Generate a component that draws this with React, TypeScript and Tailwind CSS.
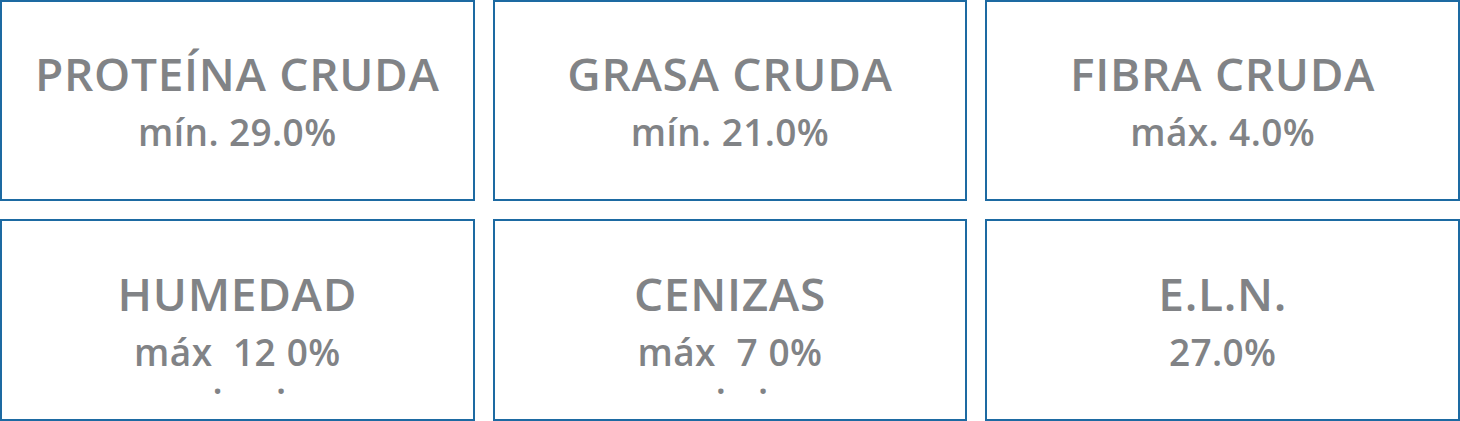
const cards: { title: string; value: React.ReactNode }[] = [
  { title: "PROTEÍNA CRUDA", value: "mín. 29.0%" },
  { title: "GRASA CRUDA", value: "mín. 21.0%" },
  { title: "FIBRA CRUDA", value: "máx. 4.0%" },
  {
    title: "HUMEDAD",
    value: (
      <>
        máx<Dot /> 12<Dot />0%
      </>
    ),
  },
  {
    title: "CENIZAS",
    value: (
      <>
        máx<Dot /> 7<Dot />0%
      </>
    ),
  },
  { title: "E.L.N.", value: "27.0%" },
];

function Dot() {
  return <span className="relative top-[28px]">.</span>;
}

export default function App() {
  return (
    <div
      className="grid h-[421px] w-[1460px] grid-cols-3 grid-rows-[201px_202px] gap-x-[18px] gap-y-[18px] bg-white"
      style={{ fontFamily: '"Open Sans", "Liberation Sans", sans-serif' }}
    >
      {cards.map((c) => (
        <div
          key={c.title}
          className="flex flex-col items-center justify-center border-2 border-[#1d6aa2] text-[#818386]"
        >
          <div className="text-[46px] leading-[56px] font-semibold tracking-[0.7px]">{c.title}</div>
          <div className="mt-[7px] text-[37px] leading-[48px] font-semibold tracking-[0.4px]">{c.value}</div>
        </div>
      ))}
    </div>
  );
}
